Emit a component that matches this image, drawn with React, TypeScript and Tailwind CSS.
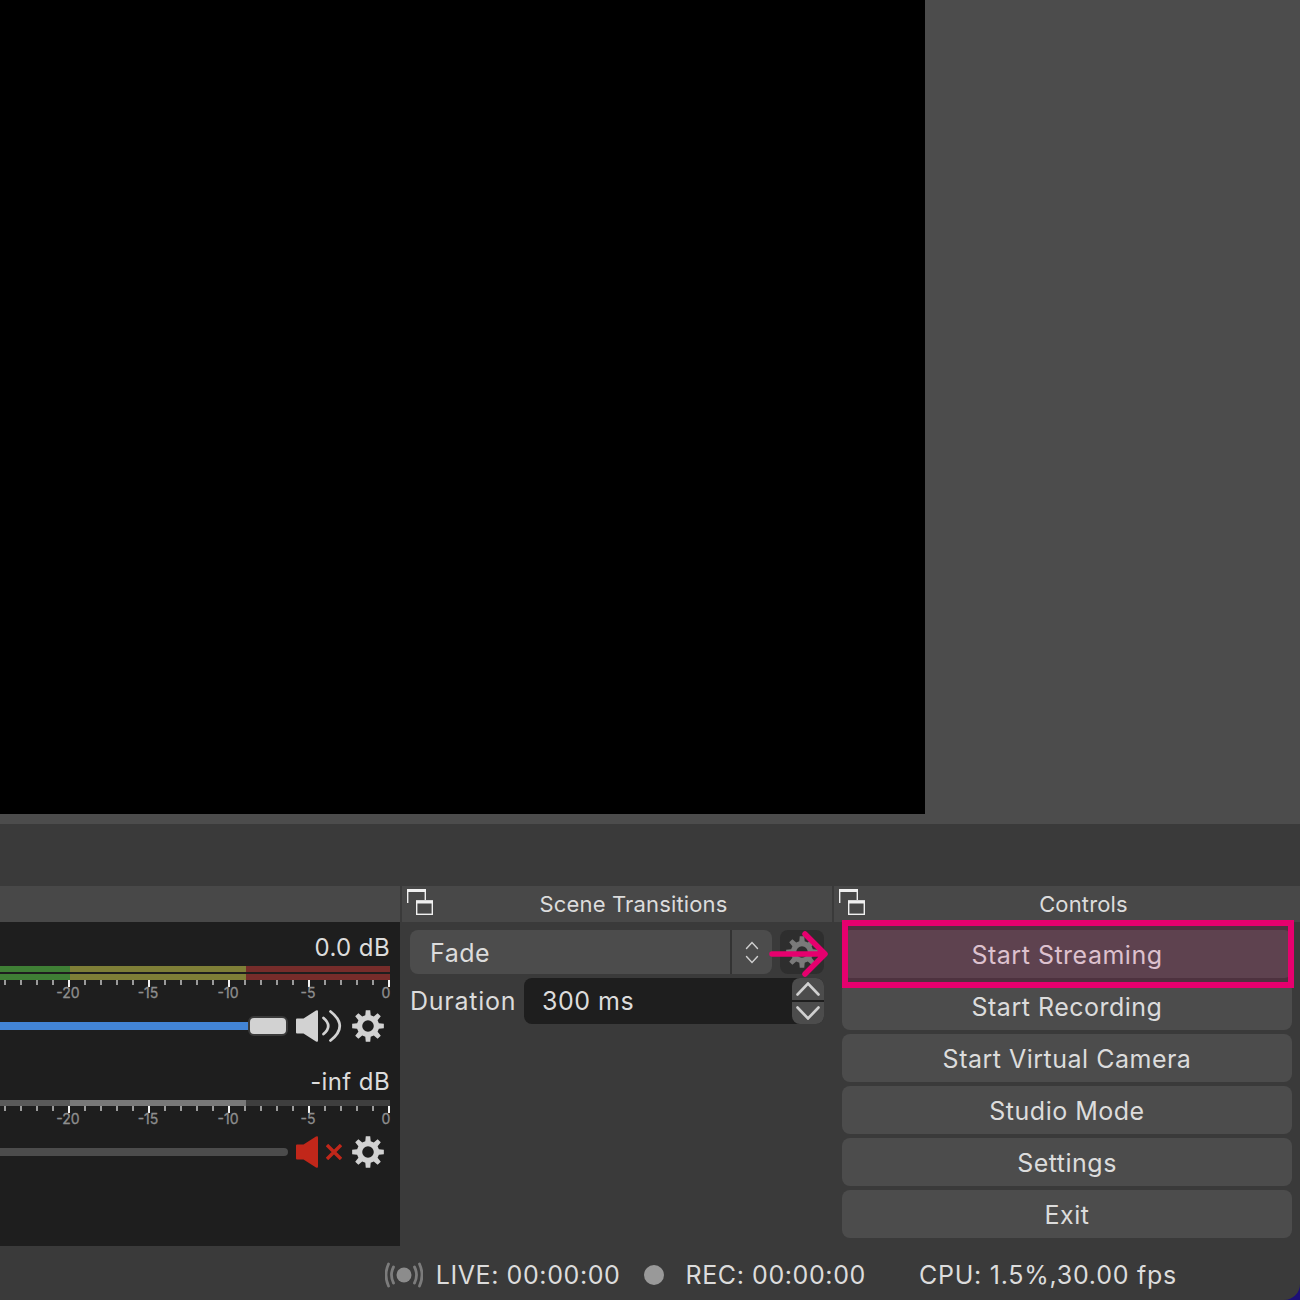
const TICKS = Array.from({ length: 25 }, (_, i) => 5 + i * 16);
const LABELS = [
    { x: 68, text: '-20' },
    { x: 148, text: '-15' },
    { x: 228, text: '-10' },
    { x: 308, text: '-5' },
    { x: 386, text: '0' }
];
const BUTTONS = ['Start Streaming', 'Start Recording', 'Start Virtual Camera', 'Studio Mode', 'Settings', 'Exit'];

// 8 tooth gear, built once from polar points
function gearPath() {
    const pt = (r: number, deg: number) => {
        const a = (deg * Math.PI) / 180;
        return `${(16 + r * Math.sin(a)).toFixed(2)} ${(16 - r * Math.cos(a)).toFixed(2)}`;
    };
    let d = '';
    for (let i = 0; i < 8; i++) {
        const c = i * 45;
        d += `${i === 0 ? 'M' : 'L'}${pt(11.2, c - 14)}L${pt(16, c - 8)}L${pt(16, c + 8)}L${pt(11.2, c + 14)}`;
    }
    return `${d}ZM${pt(5.8, 0)}A5.8 5.8 0 1 0 ${pt(5.8, 180)}A5.8 5.8 0 1 0 ${pt(5.8, 0)}Z`;
}
const GEAR = gearPath();

function DockIcon() {
    return (
        <svg width="26" height="26" viewBox="0 0 26 26" fill="none" className="shrink-0">
            <path d="M.7 14V1.500H18.300V11" stroke="#f0f0f0" strokeWidth="1.400" />
            <path d="M0 1.500H19" stroke="#f0f0f0" strokeWidth="3" />
            <rect x="9.700" y="12" width="15.600" height="13.300" fill="#484848" stroke="#f0f0f0" strokeWidth="1.400" />
            <path d="M9 13H26" stroke="#f0f0f0" strokeWidth="3" />
        </svg>
    );
}

function DockTitle({ title }: { title: string }) {
    return (
        <div className="h-9 shrink-0 bg-[#484848] flex pl-[5px] pt-[3px]">
            <DockIcon />
            <div className="flex-1 pl-0.5 text-center text-[#dcdcdc] text-[22px] leading-[30px] tracking-[0.15px]">{title}</div>
        </div>
    );
}

function Ruler({ labelY }: { labelY: string }) {
    return (
        <svg width="400" height="24" viewBox="0 0 400 24" className="block">
            {TICKS.map(x => {
                const major = (x - 5) % 80 === 64;
                return (
                    <rect
                        key={x}
                        x={x - 1}
                        y="0"
                        width="2"
                        height={major ? 7 : 5}
                        fill={major ? '#f2f2f2' : '#9a9a9a'}
                    />
                );
            })}
            {LABELS.map(l => (
                <text
                    key={l.text}
                    x={l.x}
                    y={labelY}
                    textAnchor="middle"
                    fontSize="14"
                    fill="#8e8e8e"
                    stroke="#8e8e8e"
                    strokeWidth="0.3"
                >
                    {l.text}
                </text>
            ))}
        </svg>
    );
}

function Gear({ color, className }: { color: string; className?: string }) {
    return (
        <svg width="32" height="32" viewBox="0 0 32 32" className={className}>
            <path d={GEAR} fill={color} fillRule="evenodd" />
        </svg>
    );
}

function Speaker({ color }: { color: string }) {
    return (
        <svg width="22" height="32" viewBox="0 0 22 32" className="shrink-0">
            <path
                d="M0 9.500Q0 8.500 1 8.500H7.500L20 .5Q22 -.5 22 1.500V30.500Q22 32.500 20 31.500L7.500 23.500H1Q0 23.500 0 22.500Z"
                fill={color}
            />
        </svg>
    );
}

function MixerRow({ db, muted, top, labelY }: { db: string; muted?: boolean; top: string; labelY: string }) {
    const channel = muted ? (
        <div className="flex h-1.5 w-[390px]">
            <div className="w-[70px] bg-[#5a5a5a]" />
            <div className="w-[176px] bg-[#787878]" />
            <div className="flex-1 bg-[#3e3e3e]" />
        </div>
    ) : (
        <div className="flex h-1.5 w-[390px]">
            <div className="w-[70px] bg-[#3f7f35]" />
            <div className="w-[176px] bg-[#7f7f37]" />
            <div className="flex-1 bg-[#762c2a]" />
        </div>
    );
    return (
        <div className={top}>
            <div className="h-8 pr-[10px] text-right text-[#dcdcdc] text-[24px] leading-[34px] tracking-[0.4px]">{db}</div>
            <div className="mt-[3px] flex flex-col gap-0.5">
                {channel}
                {!muted && channel}
            </div>
            <Ruler labelY={labelY} />
            <div className="mt-1.5 h-8 flex items-center">
                {muted ? (
                    <div className="w-[288px] h-2 bg-[#4c4c4c] rounded-r-full" />
                ) : (
                    <div className="w-[288px] flex items-center">
                        <div className="w-[249px] h-2 bg-[#4284d6]" />
                        <div className="w-[40px] h-[20px] -ml-px bg-[#d2d2d2] border-2 border-[#3a3a3a] rounded-md" />
                    </div>
                )}
                <div className="ml-2 w-11 flex items-center">
                    <Speaker color={muted ? '#c1271a' : '#d2d2d2'} />
                    {muted ? (
                        <svg width="16" height="16" viewBox="0 0 16 16" className="ml-2 shrink-0">
                            <path d="M1 1L15 15M15 1L1 15" stroke="#c1271a" strokeWidth="3.400" />
                        </svg>
                    ) : (
                        <svg width="24" height="32" viewBox="0 0 24 32" fill="none" className="shrink-0">
                            <path d="M5.500 8Q15 16 5.500 24" stroke="#d2d2d2" strokeWidth="2.800" strokeLinecap="round" />
                            <path d="M12.500 1.500Q31 16 12.500 30.500" stroke="#d2d2d2" strokeWidth="2.800" strokeLinecap="round" />
                        </svg>
                    )}
                </div>
                <Gear color="#d2d2d2" className="ml-3" />
            </div>
        </div>
    );
}

function Chevron({ up, w, h, s }: { up?: boolean; w: number; h: number; s: number }) {
    const d = up ? `M1.500 ${h - 1.5}L${w / 2} 1.500L${w - 1.5} ${h - 1.5}` : `M1.500 1.500L${w / 2} ${h - 1.5}L${w - 1.5} 1.500`;
    return (
        <svg width={w} height={h} viewBox={`0 0 ${w} ${h}`} fill="none">
            <path d={d} stroke="#d0d0d0" strokeWidth={s} strokeLinecap="round" />
        </svg>
    );
}

function Broadcast() {
    return (
        <svg width="38" height="26" viewBox="0 0 38 26" fill="none" stroke="#7c7c7c" strokeWidth="2.800" strokeLinecap="round">
            <circle cx="19" cy="13" r="7.500" fill="#8c8c8c" stroke="none" />
            <path d="M8.500 5Q4.500 13 8.500 21" />
            <path d="M3.500 2Q-1.500 13 3.500 24" />
            <path d="M29.500 5Q33.500 13 29.500 21" />
            <path d="M34.500 2Q39.500 13 34.500 24" />
        </svg>
    );
}

export default function App() {
    return (
        <div className="w-[1300px] h-[1300px] bg-[#1c0f78] font-['Inter',sans-serif]">
            <div className="relative w-full h-full bg-[#3a3a3a] rounded-br-[16px] overflow-hidden flex flex-col">
                {/* Preview */}
                <div className="h-[824px] shrink-0 bg-[#4c4c4c]">
                    <div className="w-[925px] h-[814px] bg-black" />
                </div>
                <div className="h-[62px] shrink-0" />

                {/* Docks */}
                <div className="h-[360px] shrink-0 flex">
                    <div className="w-[400px] flex flex-col">
                        <div className="h-9 bg-[#484848]" />
                        <div className="flex-1 bg-[#1e1e1e]">
                            <MixerRow db="0.0 dB" top="pt-[9px]" labelY="17.500" />
                            <MixerRow db="-inf dB" muted top="pt-[23px]" labelY="18" />
                        </div>
                    </div>

                    <div className="ml-0.5 w-[430px] flex flex-col">
                        <DockTitle title="Scene Transitions" />
                        <div className="pt-2 pl-2 pr-2">
                            <div className="flex gap-2">
                                <div className="w-[362px] h-11 bg-[#4c4c4c] rounded-lg flex items-center">
                                    <div className="w-[320px] pl-5 pt-1 text-[#dcdcdc] text-[25px] tracking-[0.5px]">Fade</div>
                                    <div className="w-0.5 h-full bg-[#333333]" />
                                    <div className="flex-1 flex flex-col items-center gap-[5px]">
                                        <Chevron up w={14} h={9} s={1.4} />
                                        <Chevron w={14} h={9} s={1.4} />
                                    </div>
                                </div>
                                <div className="w-11 h-11 bg-[#2e2e2e] rounded-lg flex items-center justify-center">
                                    <Gear color="#7a7a7a" />
                                </div>
                            </div>
                            <div className="mt-1 flex items-center">
                                <div className="w-[114px] pt-0.5 text-[#dcdcdc] text-[25px] tracking-[0.75px]">Duration</div>
                                <div className="w-[300px] h-[46px] bg-[#1e1e1e] rounded-lg flex">
                                    <div className="flex-1 pl-[18px] text-[#dcdcdc] text-[25px] leading-[46px] tracking-[0.5px]">300 ms</div>
                                    <div className="w-8 flex flex-col gap-0.5">
                                        <div className="h-[22px] bg-[#4c4c4c] rounded-t-lg flex items-center justify-center">
                                            <Chevron up w={24} h={14} s={2.6} />
                                        </div>
                                        <div className="h-[22px] bg-[#4c4c4c] rounded-b-lg flex items-center justify-center">
                                            <Chevron w={24} h={14} s={2.6} />
                                        </div>
                                    </div>
                                </div>
                            </div>
                        </div>
                    </div>

                    <div className="ml-0.5 flex-1 flex flex-col">
                        <DockTitle title="Controls" />
                        <div className="pt-2 pl-2 pr-2 flex flex-col gap-1">
                            {BUTTONS.map(b => (
                                <div
                                    key={b}
                                    className="h-12 pt-1 bg-[#4c4c4c] rounded-lg flex items-center justify-center text-[#dcdcdc] text-[25px] tracking-[0.5px]"
                                >
                                    {b}
                                </div>
                            ))}
                        </div>
                    </div>
                </div>

                {/* Status bar */}
                <div className="flex-1 pt-1 flex items-center justify-end pr-[123px] text-[#dcdcdc] text-[25px] tracking-[0.6px]">
                    <Broadcast />
                    <span className="ml-[13px] pt-0.5">LIVE: 00:00:00</span>
                    <span className="ml-6 w-5 h-5 rounded-full bg-[#999999]" />
                    <span className="ml-[21px] pt-0.5">REC: 00:00:00</span>
                    <span className="ml-[53px] pt-0.5 tracking-[0.75px]">CPU: 1.5%,30.00 fps</span>
                </div>

                {/* Tutorial highlight */}
                <div className="absolute left-[842px] top-[920px] w-[452px] h-[68px] border-[6px] border-[#e6006e] bg-[#e6006e]/12" />
                <svg width="70" height="56" viewBox="0 0 70 56" fill="none" className="absolute left-[766px] top-[926px]">
                    <path d="M6 28H58M39 8L59 28L39 48" stroke="#e6006e" strokeWidth="5.500" strokeLinecap="round" strokeLinejoin="round" />
                </svg>
            </div>
        </div>
    );
}
